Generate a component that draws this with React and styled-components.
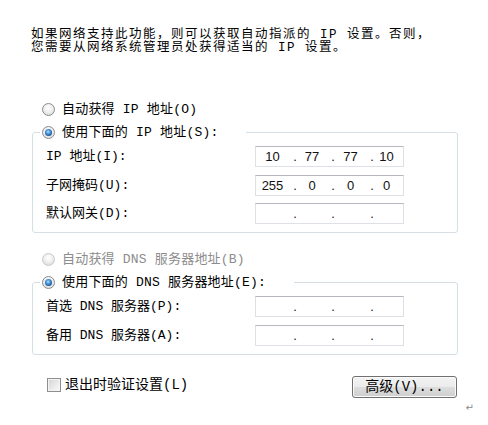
import * as React from "react";
import styled, { createGlobalStyle, css } from "styled-components";

const cjk = `"Liberation Mono", "Noto Sans CJK SC", monospace`;

// styles
const Global = createGlobalStyle`
    body {
        margin: 0;
        background: #fff;
    }
`;

const Page = styled.div`
    width: 488px;
    height: 425px;
    box-sizing: border-box;
    padding: 29px 30px 0 32px;
    display: flex;
    flex-direction: column;
    font-family: ${cjk};
    color: #000;
`;

const Intro = styled.p`
    margin: 0 0 0 -1px;
    font-size: 12.5px;
    line-height: 13px;
    letter-spacing: 1.5px;
    white-space: nowrap;
`;

const RadioRow = styled.label`
    display: flex;
    align-items: center;
    gap: 7px;
    height: 17px;
    margin: ${(p) => p.$top || 0}px 0 0 10px;
    font-size: 13px;
    line-height: 17px;
    letter-spacing: 0.2px;
    white-space: nowrap;
    color: ${(p) => (p.$disabled ? "#8c8c8c" : "#000")};
`;

const Dot = styled.span`
    position: relative;
    flex: none;
    width: 13px;
    height: 13px;
    box-sizing: border-box;
    border-radius: 50%;
    border: 1px solid ${(p) => (p.$disabled ? "#c9c9c9" : "#8b8c8c")};
    background: radial-gradient(circle at 50% 35%, #ffffff 0%, #f0f0f0 45%, #d3d3d3 100%);

    ${(p) =>
        p.$checked &&
        css`
            &::after {
                content: "";
                position: absolute;
                inset: 2px;
                border-radius: 50%;
                background: radial-gradient(
                    circle at 45% 40%,
                    #b9e2ff 0%,
                    #4a97dd 35%,
                    #134f93 75%,
                    #0c3668 100%
                );
            }
        `}
`;

const Group = styled.fieldset`
    margin: 6px 0 0 0;
    padding: 0;
    border: 1px solid #d5dfe5;
    border-radius: 3px;
    min-width: 0;
`;

const Legend = styled.legend`
    margin-left: 7px;
    padding: 0 28px 0 2px;
    height: 17px;
`;

const LegendRow = styled(RadioRow)`
    margin: 0;
`;

const Rows = styled.div`
    display: grid;
    grid-template-columns: 209px 149px;
    row-gap: 7.5px;
    align-items: center;
    padding: 5.5px 0 8px 13px;
`;

const FieldLabel = styled.span`
    font-size: 13px;
    line-height: 17px;
    white-space: nowrap;
`;

const IpBox = styled.div`
    height: 21px;
    box-sizing: border-box;
    border: 1px solid #dde1e6;
    border-top-color: #b5b9bf;
    display: grid;
    grid-template-columns: 37px 4px 34px 4px 35px 4px 1fr;
    align-items: center;
    font-family: "Liberation Sans", Arial, sans-serif;
    font-size: 13px;
    color: #111;
`;

const Seg = styled.span`
    text-align: center;
    padding-right: 4px;
`;

const Sep = styled.span`
    text-align: center;
`;

const Footer = styled.div`
    display: flex;
    justify-content: space-between;
    align-items: flex-start;
    margin-top: 21px;
    padding: 0 1px 0 15px;
`;

const CheckRow = styled.label`
    display: flex;
    align-items: center;
    gap: 4px;
    margin-top: 1px;
    font-size: 14px;
    line-height: 16px;
    white-space: nowrap;
`;

const Box = styled.span`
    width: 14px;
    height: 14px;
    box-sizing: border-box;
    border: 1px solid #8f8f8f;
    background: linear-gradient(135deg, #d2d2d2 0%, #e8e8e8 50%, #fbfbfb 100%);
    box-shadow: inset 0 0 0 1px #f4f4f4;
`;

const Button = styled.button`
    width: 105px;
    height: 22px;
    box-sizing: border-box;
    padding: 0;
    border: 1px solid #707070;
    border-radius: 3px;
    background: linear-gradient(#f3f3f3 0%, #ebebeb 50%, #dddddd 51%, #cfcfcf 100%);
    box-shadow: inset 0 0 0 1px #fbfbfb;
    font-family: ${cjk};
    font-size: 14px;
    line-height: 18px;
    color: #000;
`;

const Mark = styled.span`
    align-self: flex-end;
    margin: 5px -16px 0 0;
    font-family: "DejaVu Sans", sans-serif;
    font-size: 10px;
    line-height: 10px;
    color: #8a8a8a;
`;

// markup
const Radio = ({ checked, disabled, children, top }) => (
    <RadioRow $top={top} $disabled={disabled}>
        <Dot $checked={checked} $disabled={disabled} />
        <span>{children}</span>
    </RadioRow>
);

const IpField = ({ parts }) => (
    <IpBox>
        <Seg>{parts[0]}</Seg>
        <Sep>.</Sep>
        <Seg>{parts[1]}</Seg>
        <Sep>.</Sep>
        <Seg>{parts[2]}</Seg>
        <Sep>.</Sep>
        <Seg>{parts[3]}</Seg>
    </IpBox>
);

const empty = ["", "", "", ""];

const App = () => {
    return (
        <>
            <Global />
            <Page>
                <Intro>
                    如果网络支持此功能，则可以获取自动指派的 IP 设置。否则，
                    <br />
                    您需要从网络系统管理员处获得适当的 IP 设置。
                </Intro>

                <Radio top={45.5}>自动获得 IP 地址(O)</Radio>
                <Group>
                    <Legend>
                        <LegendRow>
                            <Dot $checked />
                            <span>使用下面的 IP 地址(S):</span>
                        </LegendRow>
                    </Legend>
                    <Rows>
                        <FieldLabel>IP 地址(I):</FieldLabel>
                        <IpField parts={["10", "77", "77", "10"]} />
                        <FieldLabel>子网掩码(U):</FieldLabel>
                        <IpField parts={["255", "0", "0", "0"]} />
                        <FieldLabel>默认网关(D):</FieldLabel>
                        <IpField parts={empty} />
                    </Rows>
                </Group>

                <Radio top={17.5} disabled>
                    自动获得 DNS 服务器地址(B)
                </Radio>
                <Group>
                    <Legend>
                        <LegendRow>
                            <Dot $checked />
                            <span>使用下面的 DNS 服务器地址(E):</span>
                        </LegendRow>
                    </Legend>
                    <Rows>
                        <FieldLabel>首选 DNS 服务器(P):</FieldLabel>
                        <IpField parts={empty} />
                        <FieldLabel>备用 DNS 服务器(A):</FieldLabel>
                        <IpField parts={empty} />
                    </Rows>
                </Group>

                <Footer>
                    <CheckRow>
                        <Box />
                        <span>退出时验证设置(L)</span>
                    </CheckRow>
                    <Button>高级(V)...</Button>
                </Footer>
                <Mark>↵</Mark>
            </Page>
        </>
    );
};

export default App;
